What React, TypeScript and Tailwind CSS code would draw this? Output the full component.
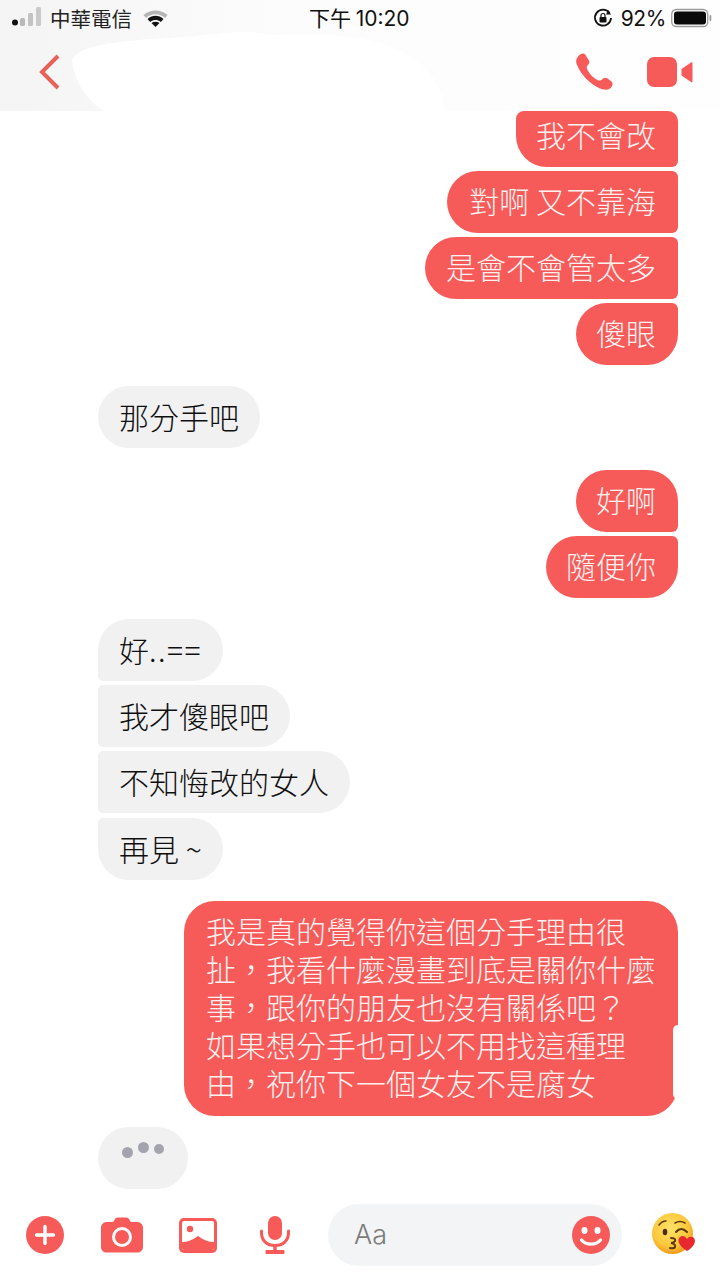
import React from "react";

const cjk = "font-['Noto_Sans_CJK_TC','Noto_Sans_CJK_JP',sans-serif]";

function Mine({ text, h = "h-[62px] pb-[4px]", r = "", pl = "pl-[20px]" }: { text: string; h?: string; r?: string; pl?: string }) {
  return (
    <div className={`self-end flex items-center ${h} ${pl} bg-[#f65b59] text-[#fdf1f0] pr-[22px] text-[30px] font-light whitespace-pre ${r}`}>
      {text}
    </div>
  );
}
function Theirs({ text, r }: { text: React.ReactNode; r: string }) {
  return (
    <div className={`self-start flex items-center h-[62px] bg-[#f1f1f2] text-[#0f0f0f] pl-[21px] pr-[21px] pb-[3px] text-[30px] font-light whitespace-pre ${r}`}>
      {text}
    </div>
  );
}

function Kiss() {
  return (
    <svg width="46" height="46" viewBox="0 0 46 46">
      <defs>
        <radialGradient id="f" cx="45%" cy="38%" r="62%">
          <stop offset="0%" stopColor="#ffe36a" />
          <stop offset="70%" stopColor="#fcc73a" />
          <stop offset="100%" stopColor="#f09a1c" />
        </radialGradient>
      </defs>
      <circle cx="21.5" cy="21.5" r="20.5" fill="url(#f)" />
      <path d="M8 13 Q11 9 15 9" stroke="#5b3a14" strokeWidth="1.6" fill="none" strokeLinecap="round" />
      <path d="M24 11 Q29 8 34 11" stroke="#5b3a14" strokeWidth="1.6" fill="none" strokeLinecap="round" />
      <ellipse cx="14" cy="20" rx="2.3" ry="3.2" fill="#4a2e12" />
      <path d="M25 20 Q30 14 36 20" stroke="#5b3a14" strokeWidth="2" fill="none" strokeLinecap="round" />
      <path d="M20 26 Q25 26 24 29 Q23 31 20 31 Q25 32 24 35 Q23 37 19 36" stroke="#5b3a14" strokeWidth="2" fill="none" strokeLinecap="round" />
      <path d="M36 39 C28 34 25.5 28 29 25 C31.5 23 34.5 24.5 36 27 C37.5 24.5 41 24 43 26 C45.5 29.5 43 35 36 39 Z" fill="#e8282f" />
    </svg>
  );
}

export default function App() {
  return (
    <div className={`relative w-[720px] h-[1280px] bg-white overflow-hidden flex flex-col ${cjk}`}>
      {/* header */}
      <div className="relative h-[111px] shrink-0 bg-gradient-to-r from-[#f5f5f5] from-5% via-[#fcfcfc] via-40% to-[#fefefe]">
        <svg className="absolute left-0 top-0" width="720" height="111" viewBox="0 0 720 111">
          <path d="M72 60 C80 44 120 40 190 37 C230 32 255 30 268 35 C300 36 340 30 390 46 C420 60 440 75 445 111 L104 111 C86 100 74 80 72 60 Z" fill="#ffffff" />
        </svg>
        <div className="relative h-[36px] flex items-center">
          <svg className="ml-[11px]" width="32" height="22" viewBox="0 0 32 22">
            <circle cx="4" cy="15.5" r="3" fill="#111" />
            <rect x="9" y="11" width="5" height="8" rx="1.5" fill="#b9b9b9" />
            <rect x="17" y="6" width="5" height="13" rx="1.5" fill="#c3c3c3" />
            <rect x="25" y="0" width="5" height="19" rx="1.5" fill="#c9c9c9" />
          </svg>
          <span className="ml-[7px] text-[20.5px] leading-none text-[#222]">中華電信</span>
          <svg className="ml-[11px]" width="25" height="18" viewBox="0 0 25 18">
            <path d="M0.5 6 C7 0 18 0 24.5 6 L22 9 C16.5 4 8.5 4 3 9 Z" fill="#b5b5b5" />
            <path d="M4.5 10 C9.5 5.8 15.5 5.8 20.5 10 L17.8 13 C14.5 10.4 10.5 10.4 7.2 13 Z" fill="#111" />
            <path d="M8.5 14 C11 12.2 14 12.2 16.5 14 L12.5 18 Z" fill="#111" />
          </svg>
          <span className="ml-[141px] text-[21px] leading-none text-[#111] whitespace-nowrap">下午 <span className="font-['Inter',sans-serif]">10:20</span></span>
          <svg className="ml-[183px]" width="20" height="20" viewBox="0 0 20 20">
            <path d="M16.5 5 A8 8 0 1 0 18 10" fill="none" stroke="#111" strokeWidth="1.8" />
            <path d="M15 2 L18 6.5 L13 6.5 Z" fill="#111" />
            <rect x="6.5" y="9" width="7" height="5.5" rx="1" fill="#111" />
            <path d="M8 9 V7.5 a2 2 0 0 1 4 0 V9" stroke="#111" strokeWidth="1.2" fill="none" />
          </svg>
          <span className="ml-[8px] text-[21px] leading-none text-[#111] font-['Inter',sans-serif] tracking-[-0.3px]">92%</span>
          <svg className="ml-[5px]" width="42" height="20" viewBox="0 0 42 20">
            <rect x="0.75" y="1.5" width="36" height="17" rx="4.5" fill="none" stroke="#9b9b9b" strokeWidth="1.3" />
            <rect x="3" y="3.5" width="32" height="13" rx="3" fill="#0a0a0a" />
            <rect x="38.5" y="7" width="1.8" height="6" rx="0.9" fill="#9b9b9b" />
          </svg>
        </div>
        <div className="relative flex items-center h-[72px]">
          <svg className="ml-[38px]" width="24" height="38" viewBox="0 0 24 38">
            <path d="M20 3 L4 19 L20 35" fill="none" stroke="#e8605b" strokeWidth="4" />
          </svg>
          <svg className="ml-[512px]" width="40" height="40" viewBox="0 0 40 40">
            <path d="M4 4.5 C6.5 1.5 10 0.5 11.5 3 L15 8.5 C16 10.5 15 12 13.5 13.5 C12.5 14.5 12.5 16 13.5 18 C16 22.5 19.5 26 23.5 28 C25.5 29 27 28.5 28 27.5 C29.5 26 31.5 25 33.5 26.5 L37.5 29.5 C39.5 31.5 38.5 34.5 36 36.5 C33 38.5 28.5 38 23 35 C14 30 7 22 3.5 14 C1.5 10 2 7 4 4.5 Z" fill="#f65b59" />
          </svg>
          <svg className="ml-[33px]" width="46" height="30" viewBox="0 0 46 30">
            <rect x="0" y="0" width="30" height="30" rx="7" fill="#f65b59" />
            <path d="M34.5 12 L44 5.5 C45 5 45.5 5.5 45.5 6.5 L45.5 24 C45.5 25 45 25.5 44 25 L34.5 18.5 Z" fill="#f65b59" />
          </svg>
        </div>
      </div>

      {/* messages */}
      <div className="flex flex-col pl-[98px] pr-[42px] leading-none">
        <Mine text="我不會改" h="h-[56px] pb-[10px]" r="rounded-tr-[10px] rounded-br-[6px] rounded-tl-[8px] rounded-bl-[31px]" />
        <div className="h-[4px]" />
        <Mine text="對啊 又不靠海" pl="pl-[22px]" r="rounded-l-[31px] rounded-r-[6px]" />
        <div className="h-[4px]" />
        <Mine text="是會不會管太多" pl="pl-[21px]" r="rounded-l-[31px] rounded-r-[6px]" />
        <div className="h-[4px]" />
        <Mine text="傻眼" r="rounded-l-[31px] rounded-tr-[6px] rounded-br-[31px]" />

        <div className="mt-[21px]">
          <Theirs text="那分手吧" r="rounded-[31px] inline-flex" />
        </div>

        <div className="mt-[22px] flex flex-col gap-[4px]">
          <Mine text="好啊" r="rounded-l-[31px] rounded-tr-[31px] rounded-br-[6px]" />
          <Mine text="隨便你" r="rounded-l-[31px] rounded-tr-[6px] rounded-br-[31px]" />
        </div>

        <div className="mt-[21px] flex flex-col gap-[4px]">
          <Theirs text={<>好<span className="tracking-[1.5px]">..==</span></>} r="rounded-r-[31px] rounded-tl-[31px] rounded-bl-[5px]" />
          <Theirs text="我才傻眼吧" r="rounded-r-[31px] rounded-l-[5px]" />
          <Theirs text="不知悔改的女人" r="rounded-r-[31px] rounded-l-[5px]" />
          <div className="mt-[1px] flex">
            <Theirs text="再見 ~" r="rounded-r-[31px] rounded-tl-[5px] rounded-bl-[31px]" />
          </div>
        </div>

        <div className="relative self-end mt-[21px] w-[494px] h-[215px] bg-[#f65b59] text-[#fdf1f0] rounded-[31px] pl-[22px] pt-[10px] text-[30px] leading-[38px] font-light whitespace-nowrap">
          我是真的覺得你這個分手理由很
          <br />
          扯，我看什麼漫畫到底是關你什麼
          <br />
          事，跟你的朋友也沒有關係吧？
          <br />
          如果想分手也可以不用找這種理
          <br />
          由，祝你下一個女友不是腐女
          <div className="absolute right-0 top-[124px] w-[5px] h-[74px] bg-white rounded-l-[5px]" />
        </div>

        <div className="self-start relative mt-[11px] w-[90px] h-[62px] bg-[#f1f1f2] rounded-[31px]">
          <span className="absolute left-[24px] top-[20px] w-[11px] h-[11px] rounded-full bg-[#a3a4ae]" />
          <span className="absolute left-[40px] top-[15px] w-[11px] h-[11px] rounded-full bg-[#a3a4ae]" />
          <span className="absolute left-[56px] top-[17px] w-[10px] h-[10px] rounded-full bg-[#a3a4ae]" />
        </div>
      </div>

      {/* toolbar */}
      <div className="mt-[15px] flex items-center h-[62px] pl-[26px]">
        <svg width="38" height="38" viewBox="0 0 38 38">
          <circle cx="19" cy="19" r="19" fill="#f65b59" />
          <path d="M19 10.5 V27.5 M10.5 19 H27.5" stroke="#fff" strokeWidth="3.4" strokeLinecap="round" />
        </svg>
        <svg className="ml-[37px]" width="42" height="36" viewBox="0 0 42 36">
          <path d="M6 5 H11 C12.5 5 13 4 13.5 3 C14 1.5 15 0.5 17 0.5 H25 C27 0.5 28 1.5 28.5 3 C29 4 29.5 5 31 5 H36 C39.5 5 42 7.5 42 10.5 V30 C42 33.5 39.5 35.5 36 35.5 H6 C2.5 35.5 0 33.5 0 30 V10.5 C0 7.5 2.5 5 6 5 Z" fill="#f65b59" />
          <circle cx="21" cy="20" r="8.5" fill="none" stroke="#fff" strokeWidth="3" />
        </svg>
        <svg className="ml-[36px]" width="38" height="35" viewBox="0 0 38 35">
          <rect x="0" y="0" width="38" height="35" rx="5" fill="#f65b59" />
          <rect x="3" y="3" width="32" height="29" rx="2" fill="#fff" />
          <circle cx="11" cy="11" r="3.2" fill="#f65b59" />
          <path d="M3 24 C9 24 13 22 19 18 C25 22 29 24 35 24 V30 C35 31 34 32 33 32 H5 C4 32 3 31 3 30 Z" fill="#f65b59" />
        </svg>
        <svg className="ml-[43px]" width="30" height="38" viewBox="0 0 30 38">
          <rect x="8" y="0" width="14" height="24" rx="7" fill="#f65b59" />
          <path d="M1.5 15 V17 C1.5 24.5 7 29.5 15 29.5 C23 29.5 28.5 24.5 28.5 17 V15" fill="none" stroke="#f65b59" strokeWidth="3" strokeLinecap="round" />
          <rect x="13.3" y="29" width="3.4" height="6" fill="#f65b59" />
          <rect x="5.5" y="34" width="19" height="4" rx="1" fill="#f65b59" />
        </svg>
        <div className="ml-[38px] w-[294px] h-[62px] bg-[#f3f4f5] rounded-[31px] flex items-center justify-between pl-[26px] pr-[12px]">
          <span className="font-['Inter',sans-serif] text-[27px] text-[#7b7b7b] font-light">Aa</span>
          <svg width="38" height="38" viewBox="0 0 38 38">
            <circle cx="19" cy="19" r="19" fill="#f65b59" />
            <ellipse cx="12.5" cy="14.5" rx="3" ry="3.4" fill="#fff" />
            <ellipse cx="25.5" cy="14.5" rx="3" ry="3.4" fill="#fff" />
            <path d="M9.5 24 C14 29.5 24 29.5 28.5 24" stroke="#fff" strokeWidth="3.2" fill="none" strokeLinecap="round" />
          </svg>
        </div>
        <div className="ml-[29px]">
          <Kiss />
        </div>
      </div>
    </div>
  );
}
